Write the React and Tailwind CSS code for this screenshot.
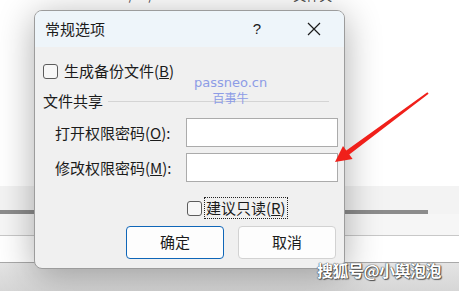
import React from "react";

const cjk = { fontFamily: '"Noto Sans CJK SC", "Noto Sans", sans-serif' };

function Box({ className = "" }) {
  return <span className={`inline-block h-[15px] w-[15px] rounded-[3px] border border-[#5c5c5c] bg-[#f7f7f7] ${className}`} />;
}

function Field({ label, hot, rest }) {
  return (
    <div className="flex h-[29px] items-center">
      <span className="w-[151px] shrink-0 whitespace-nowrap pl-[20px] text-[15px] leading-[20px] text-[#1b1b1b]">
        {label}(<u>{hot}</u>){rest}
      </span>
      <div className="h-[29px] w-[152px] border border-[#ababab] bg-white" />
    </div>
  );
}

export default function App() {
  return (
    <div className="relative h-[291px] w-[459px] overflow-hidden bg-white" style={cjk}>
      {/* explorer window behind the dialog */}
      <div className="flex h-full flex-col">
        <div className="-mt-[14px] flex h-[200px] gap-[90px] pl-[100px] text-[13px] leading-[18px] text-[#444]">
          <span>2023/12/06 20:00</span>
          <span>文件夹</span>
        </div>
        <div className="h-[24px] bg-[#f3f3f3]" />
        <div className="flex h-[4px] bg-[#f3f3f3]">
          <div className="w-[428px] bg-[#8c8c8c]" />
        </div>
        <div className="h-[22px] border-b border-[#c8c8c8] bg-[#f6f6f6]" />
        <div className="h-[27px] border-b border-[#a8a8a8] bg-white" />
        <div className="flex-1 bg-gradient-to-b from-[#e4e4e4] to-[#d6d6d6]" />
      </div>

      {/* dialog */}
      <div className="absolute left-[34px] top-[10px] flex h-[259px] w-[311px] flex-col overflow-hidden rounded-[8px] border border-[#9c9c9c] bg-[#f0f0f0] shadow-[0_6px_36px_rgba(0,0,0,0.32)]">
        <div className="flex h-[36px] shrink-0 items-center bg-[#eef5fa] pl-[10px] text-[15px] text-[#1b1b1b]">
          <span className="flex-1">常规选项</span>
          <span className="w-[40px] text-center text-[15px]" style={{ fontFamily: '"Liberation Sans", sans-serif' }}>?</span>
          <svg width="14" height="14" viewBox="0 0 14 14" className="ml-[30px] mr-[23px]">
            <path d="M1 1L13 13M13 1L1 13" stroke="#1b1b1b" strokeWidth="1.2" />
          </svg>
        </div>

        <div className="mt-[14px] flex h-[20px] items-center pl-[8px] text-[15px] text-[#1b1b1b]">
          <Box className="mr-[6px]" />
          <span>生成备份文件(<u>B</u>)</span>
        </div>

        <div className="mt-[10px] flex h-[20px] items-center pl-[8px] pr-[15px] text-[15px] text-[#1b1b1b]">
          <span>文件共享</span>
          <div className="ml-[5px] h-px flex-1 bg-[#d4d4d4]" />
        </div>

        <div className="mt-[7px] flex flex-col gap-[6px]">
          <Field label="打开权限密码" hot="O" rest=":" />
          <Field label="修改权限密码" hot="M" rest=":" />
        </div>

        <div className="mt-[15px] flex h-[22px] items-center pl-[152px]">
          <Box className="mr-[2px]" />
          <span className="border border-dotted border-[#222] px-[1px] text-[15px] leading-[20px] text-[#1b1b1b]">
            建议只读(<u>R</u>)
          </span>
        </div>

        <div className="mt-[7px] flex gap-[14px] pl-[91px]">
          <button className="h-[33px] w-[98px] rounded-[4px] border-[1.5px] border-[#0f66b8] bg-[#fdfdfd] text-[15px] text-[#1b1b1b]">确定</button>
          <button className="h-[33px] w-[98px] rounded-[4px] border border-[#d2d2d2] bg-[#fdfdfd] text-[15px] text-[#1b1b1b]">取消</button>
        </div>

        <div className="absolute left-[159px] top-[64px] flex flex-col items-center leading-[15px] text-[#8d9ce6]">
          <span className="text-[13px]" style={{ fontFamily: '"DejaVu Sans", sans-serif' }}>passneo.cn</span>
          <span className="text-[12px]">百事牛</span>
        </div>
      </div>

      {/* red arrow */}
      <svg className="absolute left-0 top-0" width="459" height="291" viewBox="0 0 459 291">
        <path d="M335 162 L343 146 L346.3 150.5 L427.4 92.2 L428.6 93.8 L349.3 154.5 L352.6 158.9 Z" fill="#f0201a" />
      </svg>

      {/* watermark */}
      <div
        className="absolute left-[317px] top-[258px] text-[16px] font-bold tracking-[-0.5px] text-white"
        style={{ textShadow: "0 0 1px #333, 0 0 1px #333, 1px 1px 1px #555" }}
      >
        搜狐号@小舆泡泡
      </div>
    </div>
  );
}
